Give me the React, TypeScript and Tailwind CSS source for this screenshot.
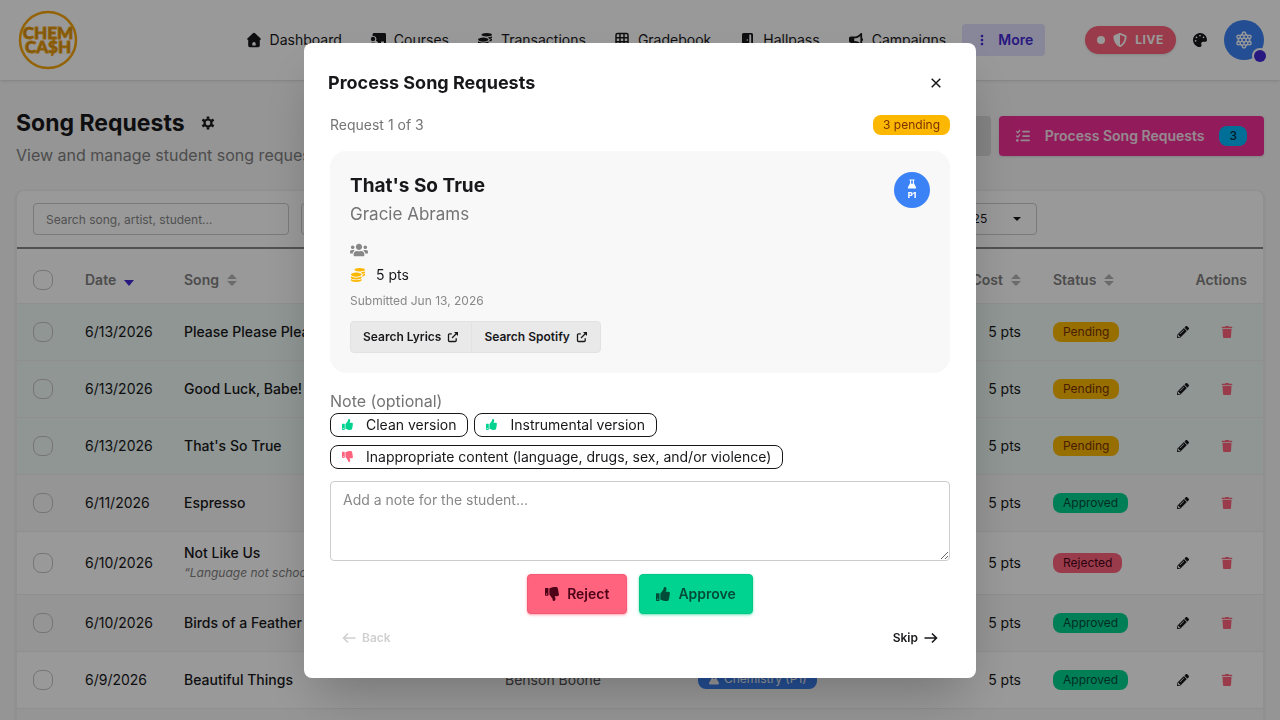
import type { ReactNode } from "react"
import { BiDotsVerticalRounded } from "react-icons/bi"
import {
  FaCoins,
  FaPalette,
  FaPencilAlt,
  FaShieldAlt,
  FaTable,
  FaThumbsDown,
  FaThumbsUp,
  FaTrash,
  FaUsers,
} from "react-icons/fa"
import { FaBullhorn, FaListCheck } from "react-icons/fa6"

type Status = "Pending" | "Approved" | "Rejected"

interface SongRequest {
  date: string
  song: string
  artist: string
  course: string
  status: Status
  note?: string
}

const requests: SongRequest[] = [
  { date: "6/13/2026", song: "Please Please Please", artist: "Sabrina Carpenter", course: "Chemistry (P1)", status: "Pending" },
  { date: "6/13/2026", song: "Good Luck, Babe!", artist: "Chappell Roan", course: "Chemistry (P1)", status: "Pending" },
  { date: "6/13/2026", song: "That's So True", artist: "Gracie Abrams", course: "Chemistry (P1)", status: "Pending" },
  { date: "6/11/2026", song: "Espresso", artist: "Sabrina Carpenter", course: "Chemistry (P1)", status: "Approved" },
  { date: "6/10/2026", song: "Not Like Us", artist: "Kendrick Lamar", course: "Chemistry (P1)", status: "Rejected", note: "“Language not school appropriate”" },
  { date: "6/10/2026", song: "Birds of a Feather", artist: "Billie Eilish", course: "Chemistry (P1)", status: "Approved" },
  { date: "6/9/2026", song: "Beautiful Things", artist: "Benson Boone", course: "Chemistry (P1)", status: "Approved" },
]

const badgeColors: Record<Status, string> = {
  Pending: "bg-[#fcb700] text-[#793205]",
  Approved: "bg-[#00d390] text-[#004c39]",
  Rejected: "bg-[#ff637d] text-[#4d0218]",
}

function HouseIcon() {
  return (
    <svg viewBox="0 0 16 16" className="size-4" fill="currentColor">
      <path d="M8 .8c.4 0 .8.2 1.100.5l5.500 5.100c.6.6.2 1.600-.6 1.600h-.2v5.500c0 .9-.7 1.700-1.700 1.700H3.900c-1 0-1.700-.8-1.700-1.700V8H2c-.8 0-1.200-1-.6-1.600l5.500-5.100C7.200 1 7.600.8 8 .8Z" />
      <path d="M6.300 13.600v-1.900a1.700 1.700 0 0 1 3.400 0v1.900Z" fill="#fff" />
    </svg>
  )
}

function BoardIcon() {
  return (
    <svg viewBox="0 0 16 16" className="size-4" fill="currentColor">
      <path d="M4 1h10.500c.8 0 1.500.7 1.500 1.500V11a1 1 0 0 1-1 1h-1V9.500h-3V12H8.500A4 4 0 0 0 6 8.800 3.200 3.200 0 0 0 2.600 4V2.500C2.600 1.700 3.200 1 4 1Z" />
      <circle cx="3" cy="7" r="2.200" />
      <path d="M0 14.500a3 3 0 0 1 3-4h.5a3 3 0 0 1 3 4Z" />
    </svg>
  )
}

function GridIcon() {
  return (
    <svg viewBox="0 0 16 16" className="size-4" fill="none" stroke="currentColor" strokeWidth="1.500">
      <rect x="2" y="1.500" width="12" height="12.500" rx="1.500" />
      <path d="M6 1.500V14M10 1.500V14M2 5.700h12M2 9.800h12" />
    </svg>
  )
}

function DoorIcon() {
  return (
    <svg viewBox="0 0 16 16" className="size-4" fill="currentColor">
      <path d="M4.500 1h8A1.500 1.500 0 0 1 14 2.500V14a1 1 0 0 1-1 1h-.8V3.500a1 1 0 0 0-1-1h-.9V15H4a1 1 0 0 1-1-1V2.500A1.500 1.500 0 0 1 4.500 1Z" />
      <circle cx="8.300" cy="8" r=".8" fill="#fff" />
    </svg>
  )
}

function GearIcon() {
  return (
    <svg viewBox="0 0 14 14" className="size-3.5" fill="none" stroke="currentColor">
      <circle cx="7" cy="7" r="3.500" strokeWidth="2.200" />
      <path
        d="M7 .5v2.200M7 11.300v2.200M1.400 3.700l1.900 1.100M10.700 9.200l1.900 1.100M1.400 10.300l1.900-1.100M10.700 4.800l1.900-1.100"
        strokeWidth="2.600"
      />
    </svg>
  )
}

function FlaskIcon({ className = "size-3" }: { className?: string }) {
  return (
    <svg viewBox="0 0 12 12" className={className} fill="currentColor">
      <path d="M3 .5h6v1.400H8.300v3.300l2.600 4.600c.4.700-.1 1.700-1 1.700H2.100c-.9 0-1.400-1-1-1.700l2.600-4.600V1.900H3V.5Zm2 1.400v3.800h2V1.900H5Z" fillRule="evenodd" />
    </svg>
  )
}

function AtomIcon() {
  return (
    <svg viewBox="0 0 18 18" className="size-[18px]" fill="none" stroke="currentColor" strokeWidth="1.400">
      <circle cx="9" cy="9" r="2" />
      <path d="M9 2.500 14.600 5.700v6.600L9 15.500l-5.600-3.200V5.700Z" strokeWidth="1.600" />
      <g fill="#3b82f6">
        <circle cx="9" cy="2.700" r="1.700" />
        <circle cx="14.400" cy="5.800" r="1.700" />
        <circle cx="14.400" cy="12.200" r="1.700" />
        <circle cx="9" cy="15.300" r="1.700" />
        <circle cx="3.600" cy="12.200" r="1.700" />
        <circle cx="3.600" cy="5.800" r="1.700" />
      </g>
      <path d="M9 4.500V7M9 11v2.500M5 6.700l2.200 1.300M10.800 10l2.200 1.300M5 11.300 7.200 10M10.800 8 13 6.700" />
    </svg>
  )
}

function ArrowIcon({ left }: { left?: boolean }) {
  return (
    <svg viewBox="0 0 14 14" className="size-3.5" fill="none" stroke="currentColor" strokeWidth="1.600">
      {left ? <path d="M13.500 7H1.500M6 2.500 1.500 7 6 11.500" /> : <path d="M.5 7h12M8 2.500 12.500 7 8 11.500" />}
    </svg>
  )
}

function ExternalIcon() {
  return (
    <svg viewBox="0 0 12 12" className="size-3" fill="none" stroke="currentColor" strokeWidth="1.300">
      <path d="M4.800 2.800H2.500a1 1 0 0 0-1 1v5.700a1 1 0 0 0 1 1h5.700a1 1 0 0 0 1-1V7.200M5 7l4.500-4.500" />
      <path d="M7 1h4v4Z" fill="currentColor" stroke="none" />
    </svg>
  )
}

function SortIcon() {
  return (
    <svg viewBox="0 0 10 14" className="h-3.5 w-2.5 opacity-60" fill="currentColor">
      <path d="M0 6 5 1l5 5ZM0 8h10l-5 5Z" />
    </svg>
  )
}

function Logo() {
  return (
    <svg viewBox="0 0 60 60" className="size-[60px]" role="img" aria-label="Chem Cash">
      <circle cx="30" cy="30" r="28" fill="none" stroke="#f5a50b" strokeWidth="2.500" />
      <g
        fill="#c98a1a"
        stroke="#f5a50b"
        strokeWidth="1"
        textAnchor="middle"
        fontSize="17"
        fontWeight="900"
        fontFamily="Lato, sans-serif"
      >
        <text x="30" y="29">CHEM</text>
        <text x="30" y="43">CA$H</text>
      </g>
    </svg>
  )
}

const navItems: { label: string; icon: ReactNode }[] = [
  { label: "Dashboard", icon: <HouseIcon /> },
  { label: "Courses", icon: <BoardIcon /> },
  { label: "Transactions", icon: <FaCoins className="size-4 p-px" /> },
  { label: "Gradebook", icon: <GridIcon /> },
  { label: "Hallpass", icon: <DoorIcon /> },
  { label: "Campaigns", icon: <FaBullhorn className="size-4 p-px" /> },
]

function Navbar() {
  return (
    <header className="relative flex h-20 items-center bg-white pr-4 pl-[18px] shadow-sm">
      <a href="#">
        <Logo />
      </a>
      <nav className="ml-auto flex items-center gap-1 text-sm">
        {navItems.map((item) => (
          <a key={item.label} href="#" className="flex items-center gap-2 px-3 py-1.5">
            {item.icon}
            {item.label}
          </a>
        ))}
        <button className="flex h-8 items-center gap-2 rounded bg-[#e3dfff] px-3 font-semibold text-[#422ad5]">
          <BiDotsVerticalRounded className="size-4" />
          More
        </button>
      </nav>
      <div className="ml-10 flex items-center gap-4">
        <button className="flex h-7 items-center gap-2 rounded-full bg-[#ff637d] px-3 text-xs font-bold tracking-wider text-white shadow">
          <span className="size-2 rounded-full bg-white" />
          <FaShieldAlt className="size-3.5" />
          LIVE
        </button>
        <button aria-label="Theme">
          <FaPalette className="size-4 p-px" />
        </button>
        <button aria-label="Account" className="relative flex size-10 items-center justify-center rounded-full bg-[#3b82f6] text-white">
          <AtomIcon />
          <span className="absolute -right-0.5 -bottom-0.5 size-3 rounded-full bg-[#422ad5] ring-2 ring-white" />
        </button>
      </div>
    </header>
  )
}

function FilterSelect({ label, value }: { label: string; value: string }) {
  return (
    <div className="relative w-[175px]">
      <select aria-label={label} className="h-8 w-full appearance-none rounded border border-[#ccc] bg-white px-3 text-xs">
        <option>{value}</option>
      </select>
      <svg viewBox="0 0 8 4" className="absolute top-3.5 right-4 h-1 w-2" fill="currentColor">
        <path d="M0 0h8L4 4Z" />
      </svg>
    </div>
  )
}

function Checkbox({ label }: { label: string }) {
  return (
    <input
      type="checkbox"
      aria-label={label}
      className="block size-5 appearance-none rounded-lg border border-[#c4c4c4]"
    />
  )
}

function RequestRow({ request, index }: { request: SongRequest; index: number }) {
  let bg = index % 2 ? "bg-[#f8f8f8]" : "bg-white"
  if (request.status === "Pending") bg = "bg-[#effaf7]"
  return (
    <tr className={`h-[57px] border-b border-[#eee] ${bg}`}>
      <td className="px-4">
        <Checkbox label={`Select ${request.song}`} />
      </td>
      <td className="px-4">{request.date}</td>
      <td className="px-4 py-[11px]">
        <div className="font-medium">{request.song}</div>
        {request.note && <div className="text-xs leading-5 text-[#808080] italic">{request.note}</div>}
      </td>
      <td className="px-4 text-[#555]">{request.artist}</td>
      <td className="px-4">
        <span className="inline-flex h-5 items-center gap-1 rounded-lg bg-[#3b82f6] px-2.5 text-xs text-white">
          <FlaskIcon />
          {request.course}
        </span>
      </td>
      <td className="px-4 text-right">5 pts</td>
      <td className="px-4">
        <span className={`inline-flex h-5 items-center rounded-lg px-2.5 text-xs ${badgeColors[request.status]}`}>
          {request.status}
        </span>
      </td>
      <td className="pr-3.5">
        <div className="flex justify-end">
          <button aria-label="Edit" className="flex h-8 w-11 items-center justify-center">
            <FaPencilAlt className="size-3" />
          </button>
          <button aria-label="Delete" className="flex h-8 w-11 items-center justify-center text-[#ff637d]">
            <FaTrash className="size-3" />
          </button>
        </div>
      </td>
    </tr>
  )
}

function RequestsPage() {
  return (
    <main className="px-4 pt-[25px]">
      <div className="mb-[23px] flex items-center justify-between">
        <div>
          <h1 className="flex items-center gap-4 text-[23px] leading-9 font-bold">
            Song Requests
            <button aria-label="Settings">
              <GearIcon />
            </button>
          </h1>
          <p className="mt-0.5 text-base text-[#808080]">View and manage student song requests</p>
        </div>
        <div className="flex gap-2">
          <button className="flex h-10 items-center gap-2 rounded bg-[#dcdcdc] px-4 text-sm font-semibold">
            <FaTable className="size-4" />
            Request Settings
          </button>
          <button className="flex h-10 items-center gap-[15px] rounded bg-[#f43098] px-[17px] text-sm font-semibold text-[#f9e4f0] shadow">
            <FaListCheck className="size-3.5" />
            Process Song Requests
            <span className="flex h-5 items-center rounded-lg bg-[#00bafe] px-2.5 text-xs font-medium text-[#042e49]">3</span>
          </button>
        </div>
      </div>

      <section className="rounded-lg border border-[#f0f0f0] bg-white shadow-sm">
        <div className="flex gap-3 border-b-2 border-[#888] px-4 py-3">
          <input
            type="search"
            aria-label="Search requests"
            placeholder="Search song, artist, student…"
            className="h-8 w-64 rounded border border-[#ccc] px-3 text-xs placeholder:text-[#888]"
          />
          <FilterSelect label="Status" value="All statuses" />
          <FilterSelect label="Course" value="All courses" />
          <FilterSelect label="Student" value="All students" />
          <FilterSelect label="Class year" value="Class year 2024-25" />
        </div>
        <table className="w-full table-fixed text-sm">
          <colgroup>
            <col className="w-13" />
            <col className="w-[99px]" />
            <col className="w-[321px]" />
            <col className="w-[193px]" />
            <col />
            <col className="w-24" />
            <col className="w-[107px]" />
            <col className="w-[119px]" />
          </colgroup>
          <thead>
            <tr className="h-[54px] border-b border-[#eee] text-left text-[#808080]">
              <th className="px-4 pt-2">
                <Checkbox label="Select all" />
              </th>
              <th className="px-4 pt-2 font-semibold">
                <button className="flex items-center gap-2">
                  Date
                  <svg viewBox="0 0 10 14" className="h-3.5 w-2.5 text-[#422ad5]" fill="currentColor">
                    <path d="M0 7h10l-5 6Z" />
                  </svg>
                </button>
              </th>
              <th className="px-4 pt-2 font-semibold">
                <button className="flex items-center gap-2">
                  Song <SortIcon />
                </button>
              </th>
              <th className="px-4 pt-2 font-semibold">Artist</th>
              <th className="px-4 pt-2 font-semibold">Class</th>
              <th className="px-4 pt-2 font-semibold">
                <button className="ml-auto flex items-center gap-2">
                  Cost <SortIcon />
                </button>
              </th>
              <th className="px-4 pt-2 font-semibold">
                <button className="flex items-center gap-2">
                  Status <SortIcon />
                </button>
              </th>
              <th className="px-4 pt-2 text-right font-semibold">Actions</th>
            </tr>
          </thead>
          <tbody>
            {requests.map((request, i) => (
              <RequestRow key={request.song} request={request} index={i} />
            ))}
          </tbody>
        </table>
        <div className="h-8 rounded-b-lg bg-[#f8f8f8]" />
      </section>
    </main>
  )
}

function NoteChip({ negative, children }: { negative?: boolean; children: ReactNode }) {
  return (
    <button className="flex h-6 items-center gap-[13px] rounded-lg border border-[#18181b] px-[11px] text-sm">
      {negative ? (
        <FaThumbsDown className="size-[11px] text-[#ff637d]" />
      ) : (
        <FaThumbsUp className="size-[11px] text-[#00d390]" />
      )}
      {children}
    </button>
  )
}

function ProcessModal() {
  return (
    <div className="fixed inset-0 flex items-center justify-center bg-black/40">
      <div
        role="dialog"
        aria-labelledby="modal-title"
        className="w-full max-w-2xl rounded-lg bg-white p-6 shadow-[0_25px_50px_-12px_rgba(0,0,0,0.25)]"
      >
        <div className="flex items-center justify-between">
          <h2 id="modal-title" className="text-lg font-bold">
            Process Song Requests
          </h2>
          <button aria-label="Close" className="flex size-8 items-center justify-center">
            <svg viewBox="0 0 10 10" className="size-2.5" fill="none" stroke="currentColor" strokeWidth="1.500">
              <path d="m.7.7 8.600 8.600M9.300.7.700 9.300" />
            </svg>
          </button>
        </div>

        <div className="px-0.5">
          <div className="my-4 flex h-5 items-center justify-between">
            <span className="text-sm text-[#747476]">Request 1 of 3</span>
            <span className="flex h-5 items-center rounded-lg bg-[#fcb700] px-2.5 text-xs text-[#793205]">3 pending</span>
          </div>

          <div className="rounded-2xl bg-[#f8f8f8] px-5 pt-[21px] pb-5">
            <div className="flex items-start justify-between">
              <div>
                <h3 className="text-[19px] leading-7 font-bold">That's So True</h3>
                <p className="text-[17px] leading-7 text-[#747476]">Gracie Abrams</p>
              </div>
              <div className="flex size-9 flex-col items-center justify-center rounded-full bg-[#3b82f6] text-[8px] leading-3 font-extrabold text-white">
                <FlaskIcon className="size-2.5" />
                P1
              </div>
            </div>
            <div className="mt-3 flex h-5 items-center">
              <FaUsers className="size-[18px] text-[#888]" />
            </div>
            <div className="mt-1 flex h-[22px] items-center gap-2.5 text-sm">
              <FaCoins className="size-4 p-px text-[#fcb700]" />5 pts
            </div>
            <p className="mt-[7px] text-xs text-[#888]">Submitted Jun 13, 2026</p>
            <div className="mt-3 flex text-xs font-semibold">
              <a href="#" className="flex h-8 items-center gap-1.5 rounded-l border border-[#e2e2e2] bg-[#e9e9e9] px-3">
                Search Lyrics
                <ExternalIcon />
              </a>
              <a href="#" className="-ml-px flex h-8 items-center gap-1.5 rounded-r border border-[#e2e2e2] bg-[#e9e9e9] px-3">
                Search Spotify
                <ExternalIcon />
              </a>
            </div>
          </div>

          <label htmlFor="note" className="mt-4 block text-base text-[#747476]">
            Note (optional)
          </label>
          <div className="flex flex-wrap gap-x-1.5 gap-y-2">
            <NoteChip>Clean version</NoteChip>
            <NoteChip>Instrumental version</NoteChip>
            <NoteChip negative>Inappropriate content (language, drugs, sex, and/or violence)</NoteChip>
          </div>
          <textarea
            id="note"
            placeholder="Add a note for the student…"
            className="mt-3 block h-20 w-full rounded border border-[#ccc] px-3 py-2 text-sm placeholder:text-[#888]"
          />

          <div className="mt-[13px] flex justify-center gap-3 text-sm font-semibold">
            <button className="flex h-10 items-center gap-2 rounded border border-[#f05a74] bg-[#ff637d] px-[17px] text-[#4d0218] shadow-sm shadow-[#ff637d]/50">
              <FaThumbsDown className="size-3.5" />
              Reject
            </button>
            <button className="flex h-10 items-center gap-2 rounded border border-[#00c686] bg-[#00d390] px-4 text-[#004c39] shadow-sm shadow-[#00d390]/50">
              <FaThumbsUp className="size-3.5" />
              Approve
            </button>
          </div>
          <div className="mt-2 flex justify-between text-xs font-semibold">
            <button disabled className="flex h-8 items-center gap-1.5 px-3 text-[#d0d0d1]">
              <ArrowIcon left />
              Back
            </button>
            <button className="flex h-8 items-center gap-1.5 px-3">
              Skip
              <ArrowIcon />
            </button>
          </div>
        </div>
      </div>
    </div>
  )
}

export default function App() {
  return (
    <div className="h-screen overflow-hidden bg-[#f8f8f8] font-['Inter',sans-serif] text-[#18181b]">
      <Navbar />
      <RequestsPage />
      <ProcessModal />
    </div>
  )
}
